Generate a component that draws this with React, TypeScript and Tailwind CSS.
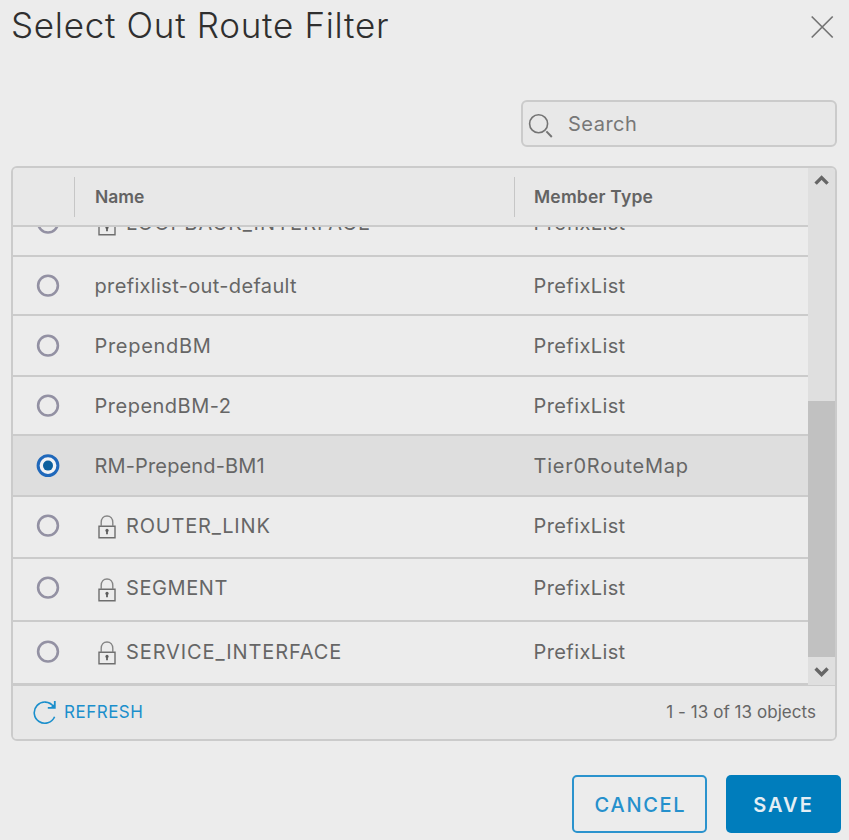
import { useState } from "react";

type Row = {
  name: string;
  type: string;
  locked?: boolean;
  height: string;
  tracking: string;
};

const rows: Row[] = [
  { name: "LOOPBACK_INTERFACE", type: "PrefixList", locked: true, height: "h-[67px]", tracking: "tracking-[1.05px]" },
  { name: "prefixlist-out-default", type: "PrefixList", height: "h-[59px]", tracking: "tracking-[0.35px]" },
  { name: "PrependBM", type: "PrefixList", height: "h-[61px]", tracking: "tracking-[0.7px]" },
  { name: "PrependBM-2", type: "PrefixList", height: "h-[59px]", tracking: "tracking-[0.5px]" },
  { name: "RM-Prepend-BM1", type: "Tier0RouteMap", height: "h-[61px]", tracking: "tracking-[0.15px]" },
  { name: "ROUTER_LINK", type: "PrefixList", locked: true, height: "h-[62px] pb-[3px]", tracking: "tracking-[0.8px]" },
  { name: "SEGMENT", type: "PrefixList", locked: true, height: "h-[63px] pb-[3px]", tracking: "tracking-[0.6px]" },
  { name: "SERVICE_INTERFACE", type: "PrefixList", locked: true, height: "h-[63px] pb-[2px]", tracking: "tracking-[0.9px]" },
];

function LockIcon() {
  return (
    <svg width="18" height="24" viewBox="0 0 18 24" fill="none" stroke="#6e6e6e" strokeWidth="1.4" className="mr-[10px] mt-[3px] shrink-0">
      <path d="M1 11.2h16v11.6H1z" />
      <path d="M3.2 11.2V7.6C3.2 3.6 5.6 1 9 1s5.8 2.6 5.8 6.6v3.6" stroke="#858585" />
      <circle cx="9" cy="15.4" r="1.6" fill="#5e5e5e" stroke="none" />
      <path d="M9 15.6v3.6" stroke="#5e5e5e" strokeWidth="1.8" />
    </svg>
  );
}

function Radio({ checked }: { checked: boolean }) {
  return (
    <svg width="24" height="24" viewBox="0 0 24 24">
      <circle cx="12" cy="11.6" r="9.9" fill={checked ? "#f1f3f6" : "none"} stroke={checked ? "#1f68bb" : "#9391a3"} strokeWidth={checked ? 3 : 2.6} />
      {checked && <circle cx="12" cy="11.6" r="5" fill="#0b5f9e" />}
    </svg>
  );
}

export default function App() {
  const [selected, setSelected] = useState("RM-Prepend-BM1");

  return (
    <div className="flex h-[840px] w-[849px] flex-col overflow-hidden bg-[#ececec] font-['Inter',sans-serif] text-[20px] leading-6 text-[#666]">
      <header className="flex h-[52px] shrink-0 items-center justify-between pl-[11px] pr-[15px]">
        <h1 className="pb-0.5 text-[35px] font-light leading-none tracking-[0.7px] text-[#2f2f2f]">Select Out Route Filter</h1>
        <button aria-label="Close" className="pt-px">
          <svg width="24" height="24" viewBox="0 0 24 24" stroke="#737373" strokeWidth="1.7">
            <path d="M1.7 1.5l21 21M22.7 1.5l-21 21" />
          </svg>
        </button>
      </header>

      <div className="mr-3 mt-12 flex h-[47px] w-[316px] shrink-0 items-center self-end rounded-md border-2 border-[#cbcbcb] bg-[#e8e8e8] pl-[5px]">
        <svg width="26" height="26" viewBox="0 0 26 26" fill="none" stroke="#747474" strokeWidth="1.6" className="mt-1">
          <circle cx="10.6" cy="10.8" r="9" />
          <path d="M18.4 18.4l5.4 5.6" strokeWidth="2" />
        </svg>
        <span className="pl-[14px] tracking-[0.5px] text-[#777]">Search</span>
      </div>

      <div className="ml-[11px] mt-[19px] flex h-[575px] w-[826px] shrink-0 flex-col overflow-hidden rounded-md border-2 border-[#cbcbcb]">
        <div className="flex h-[517px] shrink-0">
          <div className="flex w-[795px] shrink-0 flex-col">
            <div className="flex h-[59px] shrink-0 items-center border-b-2 border-[#cbcbcb] bg-[#e8e8e8] text-[17.5px] font-semibold text-[#636363]">
              <div className="h-10 w-[62px] border-r border-[#c6c6c6]" />
              <div className="flex h-10 w-[440px] items-center border-r border-[#c6c6c6] pl-5">Name</div>
              <div className="pl-[19px] tracking-[0.2px]">Member Type</div>
            </div>
            <div className="flex h-[458px] flex-col justify-end overflow-hidden">
              {rows.map((row) => (
                <div
                  key={row.name}
                  onClick={() => setSelected(row.name)}
                  className={`flex shrink-0 items-center border-b-2 border-[#cbcbcb] ${row.height} ${selected === row.name ? "bg-[#dedede]" : ""}`}
                >
                  <div className="w-[62px] pl-[23px]">
                    <Radio checked={selected === row.name} />
                  </div>
                  <div className={`flex w-[440px] items-center ${row.locked ? "pl-[23px]" : "pl-[19.5px]"} ${row.tracking}`}>
                    {row.locked && <LockIcon />}
                    {row.name}
                  </div>
                  <div className={`pl-[18.5px] ${row.type === "PrefixList" ? "tracking-[0.4px]" : "tracking-[0.75px]"}`}>{row.type}</div>
                </div>
              ))}
            </div>
          </div>
          <div className="flex w-[27px] flex-col bg-[#dfdfdf]">
            <svg width="27" height="27" viewBox="0 0 27 27" fill="none" stroke="#666" strokeWidth="3.4">
              <path d="M7.6 15.6l6-6 6 6" />
            </svg>
            <div className="mt-[206px] h-[256px] bg-[#c1c1c1]" />
            <svg width="27" height="28" viewBox="0 0 27 28" fill="none" stroke="#666" strokeWidth="3.4">
              <path d="M7.6 11.5l6 6 6-6" />
            </svg>
          </div>
        </div>
        <footer className="flex flex-1 items-center justify-between border-t border-[#cbcbcb] bg-[#e8e8e8] pl-[19px] pr-[19px] pb-0.5 text-[17px]">
          <button className="flex items-center text-[#1b8fcc]">
            <svg width="26" height="26" viewBox="0 0 26 26" fill="none" stroke="#1b8fcc" strokeWidth="1.6">
              <path d="M22.6 17.8A10.6 10.6 0 1 1 21.4 7.4" />
              <path d="M22.8 2v6.8h-7" strokeWidth="1.8" />
              <path d="M22.8 4.4v4.4h-4.6z" fill="#1b8fcc" stroke="none" />
            </svg>
            <span className="pl-[6px] tracking-[0.5px]">REFRESH</span>
          </button>
          <span className="tracking-[0.05px]">1 - 13 of 13 objects</span>
        </footer>
      </div>

      <div className="mr-2 mt-[34px] flex gap-[19px] self-end text-[20px] font-medium">
        <button className="h-[58px] w-[135px] rounded-[5px] border-2 border-[#2b93cd] pl-0.5 pt-0.5 tracking-[1.7px] text-[#2590cc]">CANCEL</button>
        <button className="h-[58px] w-[115px] rounded-[5px] bg-[#007dbc] pt-0.5 font-semibold tracking-[2px] text-[#e4eef4]">SAVE</button>
      </div>
    </div>
  );
}
